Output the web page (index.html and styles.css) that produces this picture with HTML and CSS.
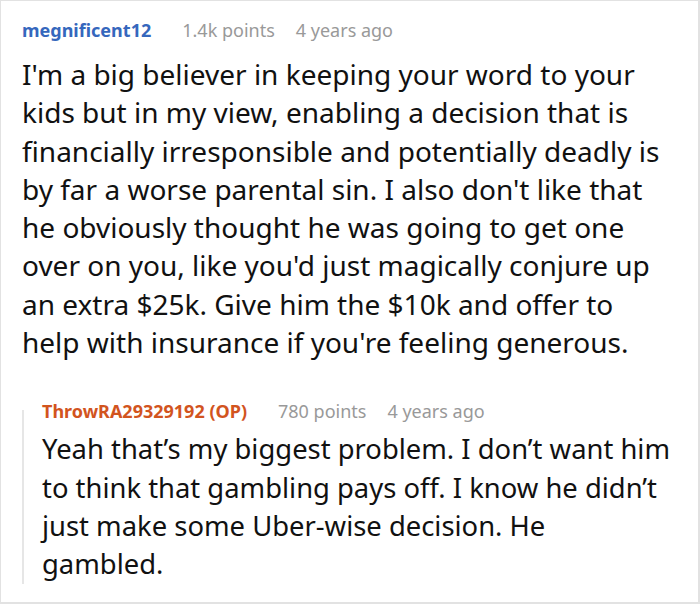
FILE: index.html
```html
<!DOCTYPE html>
<html>
<head>
<meta charset="utf-8">
<link rel="stylesheet" href="styles.css">
</head>
<body>
<div class="card">
  <div class="comment">
    <div class="meta">
      <span class="user">megnificent12</span>
      <span class="info">1.4k points</span>
      <span class="info">4 years ago</span>
    </div>
    <p class="text">I'm a big believer in keeping your word to your kids but in my view, enabling a decision that is financially irresponsible and potentially deadly is by far a worse parental sin. I also don't like that he obviously thought he was going to get one over on you, like you'd just magically conjure up an extra $25k. Give him the $10k and offer to help with insurance if you're feeling generous.</p>
  </div>
  <div class="reply">
    <div class="meta">
      <span class="user op">ThrowRA29329192 (OP)</span>
      <span class="info">780 points</span>
      <span class="info">4 years ago</span>
    </div>
    <p class="text">Yeah that’s my biggest problem. I don’t want him to think that gambling pays off. I know he didn’t just make some Uber-wise decision. He<br>gambled.</p>
  </div>
</div>
</body>
</html>
```
FILE: styles.css
```css
* { box-sizing: border-box; }
html, body { margin: 0; padding: 0; background: #fff; }
body { font-family: "Noto Sans", "Open Sans", sans-serif; color: #111; }
.card {
  width: 700px;
  height: 604px;
  border: 1px solid #e2e2e2;
  border-right-width: 2px;
  border-bottom-width: 2px;
  padding: 16px 0 0 21px;
  overflow: hidden;
}
.meta {
  display: flex;
  gap: 21px;
  align-items: baseline;
  font-size: 18px;
  line-height: 26px;
  white-space: nowrap;
}
.user { font-weight: 700; color: #3567bd; margin-right: 10px; }
.user.op { color: #d2541e; }
.info { color: #999; }
.text {
  margin: 12px 0 0;
  font-size: 28px;
  line-height: 38.3px;
  width: 645px;
}
.reply {
  margin-top: 37px;
  padding-left: 20px;
  background: linear-gradient(#e6e6e6, #e6e6e6) no-repeat 0 12px / 2px calc(100% - 12px);
}
.reply .text { margin-top: 6px; width: 650px; font-size: 27.4px; }
```
